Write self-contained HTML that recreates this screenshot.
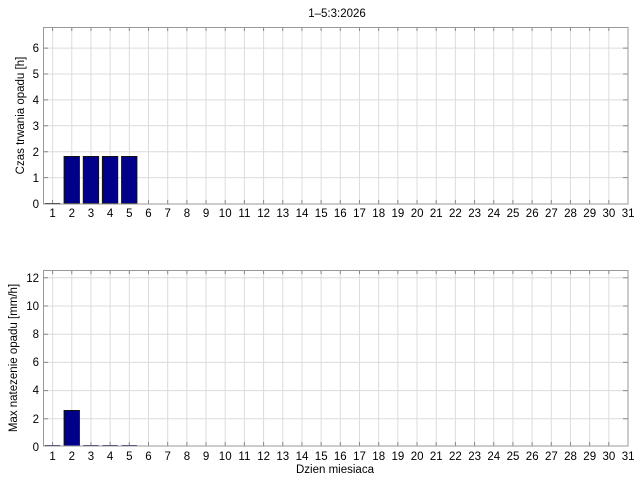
<!DOCTYPE html>
<html><head><meta charset="utf-8"><style>
html,body{margin:0;padding:0;background:#fff;}
svg{display:block;font-family:"Liberation Sans",sans-serif;}
</style></head><body>
<svg width="640" height="480" viewBox="0 0 640 480" xmlns="http://www.w3.org/2000/svg">
<rect width="640" height="480" fill="#fff"/>
<text x="337" y="17" font-size="11.5" text-anchor="middle" fill="#000">1–5:3:2026</text>

<!-- TOP PLOT -->
<g>
<path d="M52.6 27v177m19.18-177v177m19.18-177v177m19.18-177v177m19.18-177v177m19.18-177v177m19.18-177v177m19.18-177v177m19.18-177v177m19.18-177v177m19.18-177v177m19.18-177v177m19.18-177v177m19.18-177v177m19.18-177v177m19.18-177v177m19.18-177v177m19.18-177v177m19.18-177v177m19.18-177v177m19.18-177v177m19.18-177v177m19.18-177v177m19.18-177v177m19.18-177v177m19.18-177v177m19.18-177v177m19.18-177v177m19.18-177v177m19.18-177v177" stroke="#dcdcdc" stroke-width="1" fill="none"/>
<path d="M43 48.1H628M43 74H628M43 99.9H628M43 125.8H628M43 151.7H628M43 177.6H628" stroke="#dcdcdc" stroke-width="1" fill="none"/>
<path d="M52.6 27v4m19.18-4v4m19.18-4v4m19.18-4v4m19.18-4v4m19.18-4v4m19.18-4v4m19.18-4v4m19.18-4v4m19.18-4v4m19.18-4v4m19.18-4v4m19.18-4v4m19.18-4v4m19.18-4v4m19.18-4v4m19.18-4v4m19.18-4v4m19.18-4v4m19.18-4v4m19.18-4v4m19.18-4v4m19.18-4v4m19.18-4v4m19.18-4v4m19.18-4v4m19.18-4v4m19.18-4v4m19.18-4v4m19.18-4v4M52.6 204v-4m19.18 4v-4m19.18 4v-4m19.18 4v-4m19.18 4v-4m19.18 4v-4m19.18 4v-4m19.18 4v-4m19.18 4v-4m19.18 4v-4m19.18 4v-4m19.18 4v-4m19.18 4v-4m19.18 4v-4m19.18 4v-4m19.18 4v-4m19.18 4v-4m19.18 4v-4m19.18 4v-4m19.18 4v-4m19.18 4v-4m19.18 4v-4m19.18 4v-4m19.18 4v-4m19.18 4v-4m19.18 4v-4m19.18 4v-4m19.18 4v-4m19.18 4v-4m19.18 4v-4M43 48.1h5M43 74h5M43 99.9h5M43 125.8h5M43 151.7h5M43 177.6h5M628 48.1h-5M628 74h-5M628 99.9h-5M628 125.8h-5M628 151.7h-5M628 177.6h-5" stroke="#888" stroke-width="1" fill="none"/>
<g fill="#00008b" stroke="#111" stroke-width="1">
<rect x="64.1" y="156.5" width="15.3" height="47"/>
<rect x="83.3" y="156.5" width="15.3" height="47"/>
<rect x="102.4" y="156.5" width="15.3" height="47"/>
<rect x="121.6" y="156.5" width="15.3" height="47"/>
</g>
<path d="M44.9 203.5h15.3" stroke="#111" stroke-width="1"/>
<rect x="43.5" y="27.5" width="584.5" height="176.5" fill="none" stroke="#999" stroke-width="1"/>
<g font-size="11.5" text-anchor="end" fill="#000">
<text x="39" y="52">6</text><text x="39" y="78">5</text><text x="39" y="104">4</text><text x="39" y="130">3</text><text x="39" y="156">2</text><text x="39" y="182">1</text><text x="39" y="208">0</text>
</g>
<text transform="translate(24 115.5) rotate(-90)" font-size="11.5" text-anchor="middle" fill="#000">Czas trwania opadu [h]</text>
<g font-size="11.5" text-anchor="middle" fill="#000">
<text x="52.6" y="217">1</text><text x="71.8" y="217">2</text><text x="91" y="217">3</text><text x="110.1" y="217">4</text><text x="129.3" y="217">5</text><text x="148.5" y="217">6</text><text x="167.7" y="217">7</text><text x="186.9" y="217">8</text><text x="206.1" y="217">9</text><text x="225.2" y="217">10</text><text x="244.4" y="217">11</text><text x="263.6" y="217">12</text><text x="282.8" y="217">13</text><text x="302" y="217">14</text><text x="321.2" y="217">15</text><text x="340.3" y="217">16</text><text x="359.5" y="217">17</text><text x="378.7" y="217">18</text><text x="397.9" y="217">19</text><text x="417.1" y="217">20</text><text x="436.3" y="217">21</text><text x="455.4" y="217">22</text><text x="474.6" y="217">23</text><text x="493.8" y="217">24</text><text x="513" y="217">25</text><text x="532.2" y="217">26</text><text x="551.4" y="217">27</text><text x="570.5" y="217">28</text><text x="589.7" y="217">29</text><text x="608.9" y="217">30</text><text x="628.1" y="217">31</text>
</g>
</g>

<!-- BOTTOM PLOT -->
<g>
<path d="M52.6 270v176m19.18-176v176m19.18-176v176m19.18-176v176m19.18-176v176m19.18-176v176m19.18-176v176m19.18-176v176m19.18-176v176m19.18-176v176m19.18-176v176m19.18-176v176m19.18-176v176m19.18-176v176m19.18-176v176m19.18-176v176m19.18-176v176m19.18-176v176m19.18-176v176m19.18-176v176m19.18-176v176m19.18-176v176m19.18-176v176m19.18-176v176m19.18-176v176m19.18-176v176m19.18-176v176m19.18-176v176m19.18-176v176m19.18-176v176" stroke="#dcdcdc" stroke-width="1" fill="none"/>
<path d="M43 277.8H628M43 306H628M43 334.2H628M43 362.4H628M43 390.6H628M43 418.8H628" stroke="#dcdcdc" stroke-width="1" fill="none"/>
<path d="M52.6 270v4m19.18-4v4m19.18-4v4m19.18-4v4m19.18-4v4m19.18-4v4m19.18-4v4m19.18-4v4m19.18-4v4m19.18-4v4m19.18-4v4m19.18-4v4m19.18-4v4m19.18-4v4m19.18-4v4m19.18-4v4m19.18-4v4m19.18-4v4m19.18-4v4m19.18-4v4m19.18-4v4m19.18-4v4m19.18-4v4m19.18-4v4m19.18-4v4m19.18-4v4m19.18-4v4m19.18-4v4m19.18-4v4m19.18-4v4M52.6 446v-4m19.18 4v-4m19.18 4v-4m19.18 4v-4m19.18 4v-4m19.18 4v-4m19.18 4v-4m19.18 4v-4m19.18 4v-4m19.18 4v-4m19.18 4v-4m19.18 4v-4m19.18 4v-4m19.18 4v-4m19.18 4v-4m19.18 4v-4m19.18 4v-4m19.18 4v-4m19.18 4v-4m19.18 4v-4m19.18 4v-4m19.18 4v-4m19.18 4v-4m19.18 4v-4m19.18 4v-4m19.18 4v-4m19.18 4v-4m19.18 4v-4m19.18 4v-4m19.18 4v-4M43 277.8h5M43 306h5M43 334.2h5M43 362.4h5M43 390.6h5M43 418.8h5M628 277.8h-5M628 306h-5M628 334.2h-5M628 362.4h-5M628 390.6h-5M628 418.8h-5" stroke="#888" stroke-width="1" fill="none"/>
<rect x="64.1" y="410.5" width="15.3" height="35.5" fill="#00008b" stroke="#111" stroke-width="1"/>
<path d="M44.9 445.5h15.3M83.3 445.5h15.3M102.4 445.5h15.3M121.6 445.5h15.3" stroke="#22226b" stroke-width="1"/>
<rect x="43.5" y="270.5" width="584.5" height="175.5" fill="none" stroke="#999" stroke-width="1"/>
<g font-size="11.5" text-anchor="end" fill="#000">
<text x="39" y="282">12</text><text x="39" y="310">10</text><text x="39" y="338">8</text><text x="39" y="366">6</text><text x="39" y="394">4</text><text x="39" y="423">2</text><text x="39" y="451">0</text>
</g>
<text transform="translate(17 358) rotate(-90)" font-size="11.5" text-anchor="middle" fill="#000">Max natezenie opadu [mm/h]</text>
<g font-size="11.5" text-anchor="middle" fill="#000">
<text x="52.6" y="460">1</text><text x="71.8" y="460">2</text><text x="91" y="460">3</text><text x="110.1" y="460">4</text><text x="129.3" y="460">5</text><text x="148.5" y="460">6</text><text x="167.7" y="460">7</text><text x="186.9" y="460">8</text><text x="206.1" y="460">9</text><text x="225.2" y="460">10</text><text x="244.4" y="460">11</text><text x="263.6" y="460">12</text><text x="282.8" y="460">13</text><text x="302" y="460">14</text><text x="321.2" y="460">15</text><text x="340.3" y="460">16</text><text x="359.5" y="460">17</text><text x="378.7" y="460">18</text><text x="397.9" y="460">19</text><text x="417.1" y="460">20</text><text x="436.3" y="460">21</text><text x="455.4" y="460">22</text><text x="474.6" y="460">23</text><text x="493.8" y="460">24</text><text x="513" y="460">25</text><text x="532.2" y="460">26</text><text x="551.4" y="460">27</text><text x="570.5" y="460">28</text><text x="589.7" y="460">29</text><text x="608.9" y="460">30</text><text x="628.1" y="460">31</text>
</g>
<text x="335" y="473" font-size="11.5" text-anchor="middle" fill="#000">Dzien miesiaca</text>
</g>
</svg>
</body></html>
